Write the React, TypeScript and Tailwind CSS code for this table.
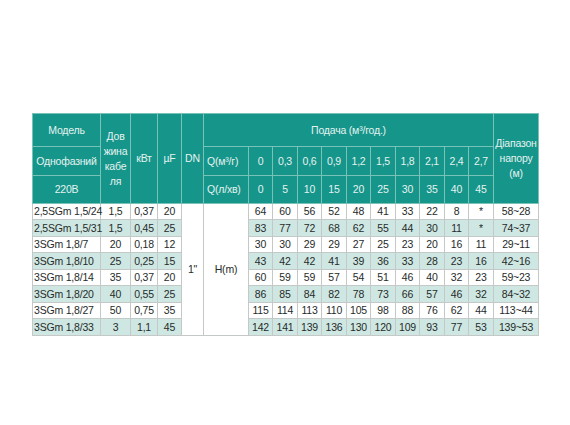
const flows = ["0", "0,3", "0,6", "0,9", "1,2", "1,5", "1,8", "2,1", "2,4", "2,7"];
const litres = ["0", "5", "10", "15", "20", "25", "30", "35", "40", "45"];
const dataWidths = [24, 25, 24, 25, 24, 25, 24, 25, 24, 25];

type Row = {
  model: string;
  cable: string;
  kw: string;
  uf: string;
  head: string[];
  range: string;
};

const rows: Row[] = [
  { model: "2,5SGm 1,5/24", cable: "1,5", kw: "0,37", uf: "20", head: ["64", "60", "56", "52", "48", "41", "33", "22", "8", "*"], range: "58~28" },
  { model: "2,5SGm 1,5/31", cable: "1,5", kw: "0,45", uf: "25", head: ["83", "77", "72", "68", "62", "55", "44", "30", "11", "*"], range: "74~37" },
  { model: "3SGm 1,8/7", cable: "20", kw: "0,18", uf: "12", head: ["30", "30", "29", "29", "27", "25", "23", "20", "16", "11"], range: "29~11" },
  { model: "3SGm 1,8/10", cable: "25", kw: "0,25", uf: "15", head: ["43", "42", "42", "41", "39", "36", "33", "28", "23", "16"], range: "42~16" },
  { model: "3SGm 1,8/14", cable: "35", kw: "0,37", uf: "20", head: ["60", "59", "59", "57", "54", "51", "46", "40", "32", "23"], range: "59~23" },
  { model: "3SGm 1,8/20", cable: "40", kw: "0,55", uf: "25", head: ["86", "85", "84", "82", "78", "73", "66", "57", "46", "32"], range: "84~32" },
  { model: "3SGm 1,8/27", cable: "50", kw: "0,75", uf: "35", head: ["115", "114", "113", "110", "105", "98", "88", "76", "62", "44"], range: "113~44" },
  { model: "3SGm 1,8/33", cable: "3", kw: "1,1", uf: "45", head: ["142", "141", "139", "136", "130", "120", "109", "93", "77", "53"], range: "139~53" },
];

const th = "border border-[#78c2b8] bg-[#16958a] text-[#e4f3f0] font-normal text-center align-middle p-0";
const td = "border border-[#c4c9c8] text-center align-middle p-0 text-[#262b2a]";

export default function App() {
  return (
    <div className="min-h-[425px] w-[570px] bg-white pl-[32px] pt-[113px] font-['Liberation_Sans',Arial,sans-serif] text-[10.5px] leading-none tracking-[-0.2px]">
      <table className="table-fixed border-collapse" style={{ width: 506 }}>
        <colgroup>
          <col className="w-[68px]" />
          <col className="w-[30px]" />
          <col className="w-[27px]" />
          <col className="w-[24px]" />
          <col className="w-[22px]" />
          <col className="w-[45px]" />
          {dataWidths.map((w, i) => (
            <col key={i} style={{ width: w }} />
          ))}
          <col className="w-[45px]" />
        </colgroup>
        <thead>
          <tr className="h-[33px]">
            <th className={th}>Модель</th>
            <th rowSpan={3} className={`${th} leading-[15px]`}>
              Дов
              <br />
              жина
              <br />
              кабе
              <br />
              ля
            </th>
            <th rowSpan={3} className={th}>кВт</th>
            <th rowSpan={3} className={th}>µF</th>
            <th rowSpan={3} className={th}>DN</th>
            <th colSpan={11} className={th}>
              Подача (м³/год.)
            </th>
            <th rowSpan={3} className={`${th} leading-[15px]`}>
              Діапазон
              <br />
              напору
              <br />
              (м)
            </th>
          </tr>
          <tr className="h-[29px]">
            <th className={th}>Однофазний</th>
            <th className={`${th} text-left pl-[3px]`}>Q(м³/г)</th>
            {flows.map((f) => (
              <th key={f} className={th}>
                {f}
              </th>
            ))}
          </tr>
          <tr className="h-[28px]">
            <th className={th}>220В</th>
            <th className={`${th} text-left pl-[3px]`}>Q(л/хв)</th>
            {litres.map((l) => (
              <th key={l} className={th}>
                {l}
              </th>
            ))}
          </tr>
        </thead>
        <tbody>
          {rows.map((r, i) => {
            const bg = i % 2 === 0 ? "bg-white" : "bg-[#cfe7e2]";
            return (
              <tr key={r.model} className={i % 2 === 0 ? "h-[16px]" : "h-[17px]"}>
                <td className={`${td} ${bg} text-left pl-[1px] whitespace-nowrap`}>{r.model}</td>
                <td className={`${td} ${bg}`}>{r.cable}</td>
                <td className={`${td} ${bg}`}>{r.kw}</td>
                <td className={`${td} ${bg}`}>{r.uf}</td>
                {i === 0 && (
                  <>
                    <td rowSpan={8} className={`${td} bg-white`}>
                      1"
                    </td>
                    <td rowSpan={8} className={`${td} bg-white`}>
                      H(m)
                    </td>
                  </>
                )}
                {r.head.map((h, j) => (
                  <td key={j} className={`${td} ${bg}`}>
                    {h}
                  </td>
                ))}
                <td className={`${td} ${bg}`}>{r.range}</td>
              </tr>
            );
          })}
        </tbody>
      </table>
    </div>
  );
}
